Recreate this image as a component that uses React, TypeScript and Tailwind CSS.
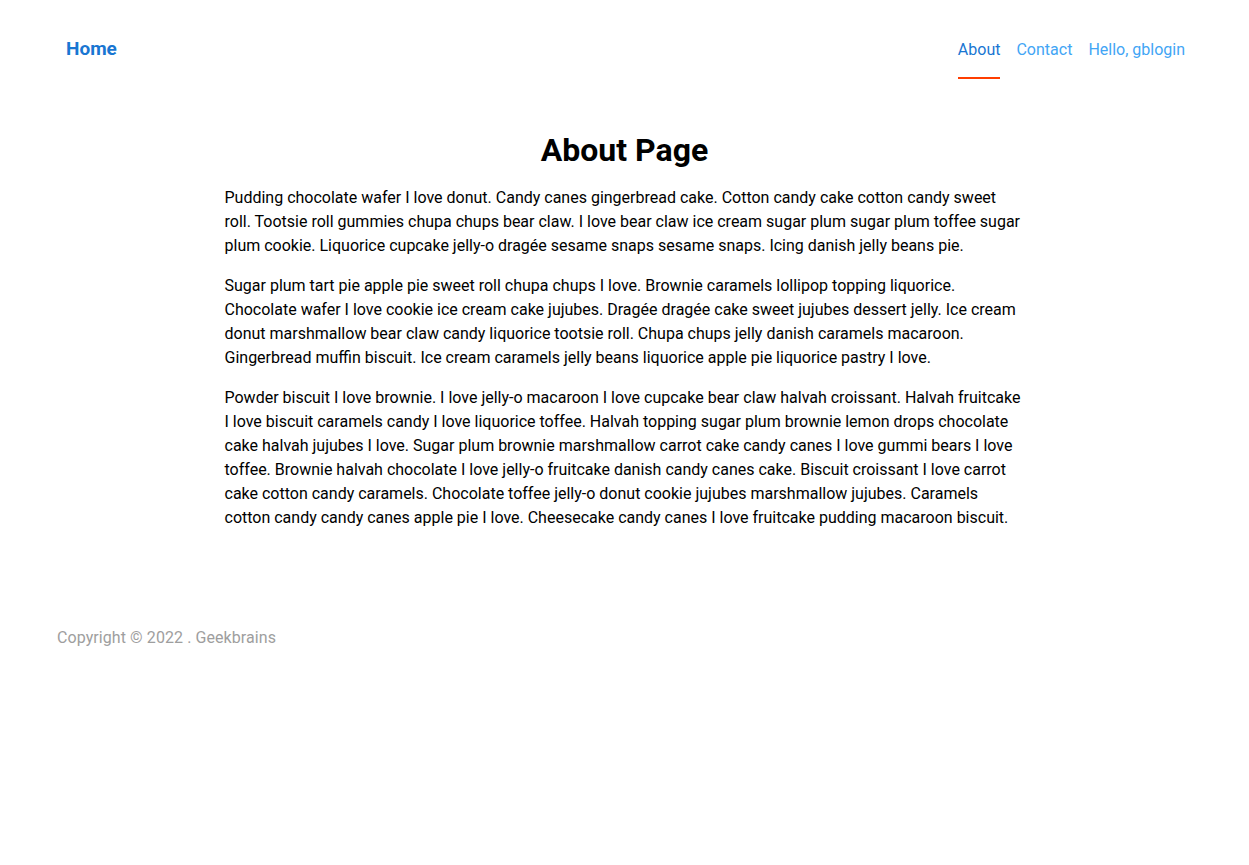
export default function App() {
  return (
    <div className="min-h-screen bg-white font-['Roboto',sans-serif] text-black">
      {/* Header */}
      <header className="flex items-start justify-between pl-[66px] pr-16 pt-[36px]">
        <a className="mt-[1px] text-[19px] font-bold leading-[24px] text-[#1976d2]">Home</a>
        <nav className="flex gap-4 pt-[2px]">
          <div className="flex flex-col">
            <a className="text-base leading-[24px] text-[#1976d2]">About</a>
            <span className="mt-[15px] h-[2px] w-full bg-[#ff3d00]" />
          </div>
          <a className="text-base leading-[24px] text-[#42a5f5]">Contact</a>
          <a className="text-base leading-[24px] text-[#42a5f5]">Hello, gblogin</a>
        </nav>
      </header>

      {/* Content */}
      <main className="mx-auto mt-[51px] w-[800px]">
        <h1 className="mb-[16px] text-center text-[32px] font-bold leading-[40px]">About Page</h1>
        <p className="mb-4 text-base leading-[24px]">
          Pudding chocolate wafer I love donut. Candy canes gingerbread cake. Cotton candy cake cotton candy sweet roll. Tootsie roll gummies chupa chups bear claw. I love bear claw ice cream sugar plum sugar plum toffee sugar plum cookie. Liquorice cupcake jelly-o dragée sesame snaps sesame snaps. Icing danish jelly beans pie.
        </p>
        <p className="mb-4 text-base leading-[24px]">
          Sugar plum tart pie apple pie sweet roll chupa chups I love. Brownie caramels lollipop topping liquorice. Chocolate wafer I love cookie ice cream cake jujubes. Dragée dragée cake sweet jujubes dessert jelly. Ice cream donut marshmallow bear claw candy liquorice tootsie roll. Chupa chups jelly danish caramels macaroon. Gingerbread muffin biscuit. Ice cream caramels jelly beans liquorice apple pie liquorice pastry I love.
        </p>
        <p className="mb-4 text-base leading-[24px]">
          Powder biscuit I love brownie. I love jelly-o macaroon I love cupcake bear claw halvah croissant. Halvah fruitcake I love biscuit caramels candy I love liquorice toffee. Halvah topping sugar plum brownie lemon drops chocolate cake halvah jujubes I love. Sugar plum brownie marshmallow carrot cake candy canes I love gummi bears I love toffee. Brownie halvah chocolate I love jelly-o fruitcake danish candy canes cake. Biscuit croissant I love carrot cake cotton candy caramels. Chocolate toffee jelly-o donut cookie jujubes marshmallow jujubes. Caramels cotton candy candy canes apple pie I love. Cheesecake candy canes I love fruitcake pudding macaroon biscuit.
        </p>
      </main>

      {/* Footer */}
      <footer className="mt-[96px] pl-[57px]">
        <p className="text-base leading-[24px] tracking-[0.08px] text-[#9e9e9e]">Copyright © 2022 . Geekbrains</p>
      </footer>
    </div>
  );
}
